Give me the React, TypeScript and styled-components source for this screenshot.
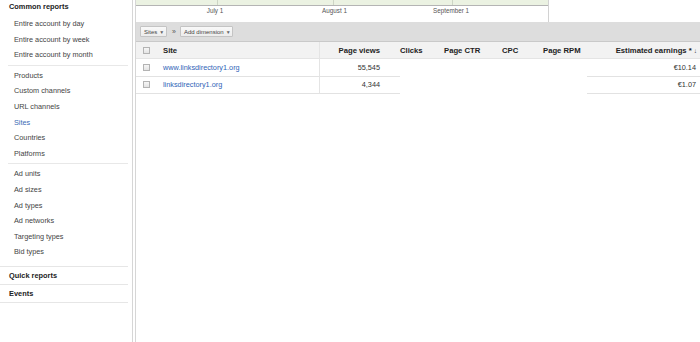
import React from "react";
import styled, { createGlobalStyle } from "styled-components";

const Global = createGlobalStyle`
  html, body { margin: 0; padding: 0; background: #fff; }
  body { font-family: "Liberation Sans", Arial, sans-serif; }
`;

const Page = styled.div`
  display: flex;
  width: 700px;
  height: 342px;
  overflow: hidden;
  background: #fff;
`;

const Sidebar = styled.nav`
  width: 133px;
  flex: none;
  box-sizing: border-box;
  border-right: 1px solid #d6d6d6;
  padding-right: 4px;
`;

const CommonSection = styled.div`
  padding-bottom: 6px;
  border-bottom: 1px solid #e6e6e6;
`;

const SectionTitle = styled.div<{ $h: number }>`
  font-size: 7.4px;
  font-weight: bold;
  color: #222;
  padding-left: 9px;
  height: ${(p) => p.$h}px;
  line-height: ${(p) => p.$h}px;
  white-space: nowrap;
`;

const Section = styled.div`
  border-bottom: 1px solid #e6e6e6;
`;

const ItemList = styled.ul`
  list-style: none;
  margin: 2px 0 0 8px;
  padding: 0;
`;

const Item = styled.li<{ $active?: boolean }>`
  height: 15.6px;
  line-height: 15.6px;
  padding-left: 6px;
  font-size: 7.3px;
  color: ${(p) => (p.$active ? "#3b6bb5" : "#444")};
  white-space: nowrap;
`;

const Divider = styled.li`
  height: 1px;
  margin: 2px 0;
  background: #e8e8e8;
`;

const Main = styled.main`
  flex: 1;
  margin-left: 2px;
  border-left: 1px solid #d6d6d6;
  display: flex;
  flex-direction: column;
  min-width: 0;
`;

const ChartBox = styled.div`
  width: 413px;
  height: 22px;
  box-sizing: border-box;
  border-right: 1px solid #d2d2d2;
`;

const Toolbar = styled.div`
  height: 19px;
  background: #dddddd;
  display: flex;
  align-items: center;
  padding-left: 4px;
  gap: 5px;
`;

const DropButton = styled.div<{ $w: number }>`
  width: ${(p) => p.$w}px;
  height: 11px;
  box-sizing: border-box;
  border: 1px solid #c4c4c4;
  border-radius: 1px;
  background: linear-gradient(#f9f9f9, #ececec);
  font-size: 6px;
  color: #444;
  display: flex;
  align-items: center;
  padding-left: 3px;
  gap: 2px;
  white-space: nowrap;
`;

const Caret = styled.span`
  font-size: 5px;
  color: #666;
`;

const Chevron = styled.span`
  font-size: 7px;
  color: #555;
  width: 3px;
`;

const COLS = "22px 161px 81px 44px 58px 41px 44px 113px";

const HeaderRow = styled.div`
  display: grid;
  grid-template-columns: ${COLS};
  height: 18px;
  box-sizing: border-box;
  border-top: 1px solid #c9c9c9;
  border-bottom: 1px solid #e4e4e4;
  background: #f2f2f2;
  font-size: 7.7px;
  font-weight: bold;
  color: #222;
`;

const BodyRow = styled.div`
  display: grid;
  grid-template-columns: ${COLS};
  height: 17.5px;
  font-size: 7.3px;
  color: #333;
`;

const Cell = styled.div<{ $align?: "left" | "right"; $pl?: number; $pr?: number; $lined?: boolean; $rule?: boolean }>`
  display: flex;
  align-items: center;
  justify-content: ${(p) => (p.$align === "right" ? "flex-end" : "flex-start")};
  padding-left: ${(p) => p.$pl ?? 0}px;
  padding-right: ${(p) => p.$pr ?? 0}px;
  box-sizing: border-box;
  border-bottom: ${(p) => (p.$lined ? "1px solid #e2e2e2" : "none")};
  border-left: ${(p) => (p.$rule ? "1px solid #e4e4e4" : "none")};
  white-space: nowrap;
  min-width: 0;
`;

const Check = styled.span`
  width: 7px;
  height: 7px;
  box-sizing: border-box;
  border: 1px solid #b3b3b3;
  background: linear-gradient(#f6f6f6, #e4e4e4);
  margin-left: 7px;
`;

const SiteLink = styled.a`
  color: #2f64b7;
  text-decoration: none;
`;

const SortArrow = styled.span`
  font-size: 6.5px;
  margin-left: 2px;
  color: #444;
`;

function Chart() {
  const grid = [81, 197, 316];
  const labels: [number, string][] = [
    [79, "July 1"],
    [198.5, "August 1"],
    [315, "September 1"],
  ];
  return (
    <ChartBox>
      <svg width="412" height="22" viewBox="0 0 412 22">
        <rect x="0" y="0" width="412" height="5" fill="#ebf2e2" />
        {grid.map((x) => (
          <line key={x} x1={x + 0.5} y1="0" x2={x + 0.5} y2="5" stroke="#cdd5c5" strokeWidth="1" />
        ))}
        <line x1="0" y1="5.5" x2="412" y2="5.5" stroke="#b4b4b4" strokeWidth="1" />
        {labels.map(([x, t]) => (
          <text
            key={t}
            x={x}
            y="13.2"
            textAnchor="middle"
            fontSize="6.3"
            fill="#555"
            fontFamily="'Liberation Sans', Arial, sans-serif"
          >
            {t}
          </text>
        ))}
      </svg>
    </ChartBox>
  );
}

const rows = [
  { site: "www.linksdirectory1.org", views: "55,545", earn: "€10.14" },
  { site: "linksdirectory1.org", views: "4,344", earn: "€1.07" },
];

export default function App() {
  return (
    <>
      <Global />
      <Page>
        <Sidebar>
          <CommonSection>
            <SectionTitle $h={14}>Common reports</SectionTitle>
            <ItemList>
              <Item>Entire account by day</Item>
              <Item>Entire account by week</Item>
              <Item>Entire account by month</Item>
              <Divider />
              <Item>Products</Item>
              <Item>Custom channels</Item>
              <Item>URL channels</Item>
              <Item $active>Sites</Item>
              <Item>Countries</Item>
              <Item>Platforms</Item>
              <Divider />
              <Item>Ad units</Item>
              <Item>Ad sizes</Item>
              <Item>Ad types</Item>
              <Item>Ad networks</Item>
              <Item>Targeting types</Item>
              <Item>Bid types</Item>
            </ItemList>
          </CommonSection>
          <Section>
            <SectionTitle $h={17}>Quick reports</SectionTitle>
          </Section>
          <Section>
            <SectionTitle $h={17}>Events</SectionTitle>
          </Section>
        </Sidebar>
        <Main>
          <Chart />
          <Toolbar>
            <DropButton $w={27}>
              Sites <Caret>▼</Caret>
            </DropButton>
            <Chevron>»</Chevron>
            <DropButton $w={53}>
              Add dimension <Caret>▼</Caret>
            </DropButton>
          </Toolbar>
          <HeaderRow>
            <Cell>
              <Check />
            </Cell>
            <Cell $pl={5}>Site</Cell>
            <Cell $align="right" $pr={20} $rule>
              Page views
            </Cell>
            <Cell>Clicks</Cell>
            <Cell>Page CTR</Cell>
            <Cell>CPC</Cell>
            <Cell>Page RPM</Cell>
            <Cell $align="right" $pr={3}>
              Estimated earnings *<SortArrow>↓</SortArrow>
            </Cell>
          </HeaderRow>
          {rows.map((r) => (
            <BodyRow key={r.site}>
              <Cell $lined>
                <Check />
              </Cell>
              <Cell $pl={5} $lined>
                <SiteLink href="#">{r.site}</SiteLink>
              </Cell>
              <Cell $align="right" $pr={20} $lined $rule>
                {r.views}
              </Cell>
              <Cell />
              <Cell />
              <Cell />
              <Cell />
              <Cell $align="right" $pr={4} $lined>
                {r.earn}
              </Cell>
            </BodyRow>
          ))}
        </Main>
      </Page>
    </>
  );
}
